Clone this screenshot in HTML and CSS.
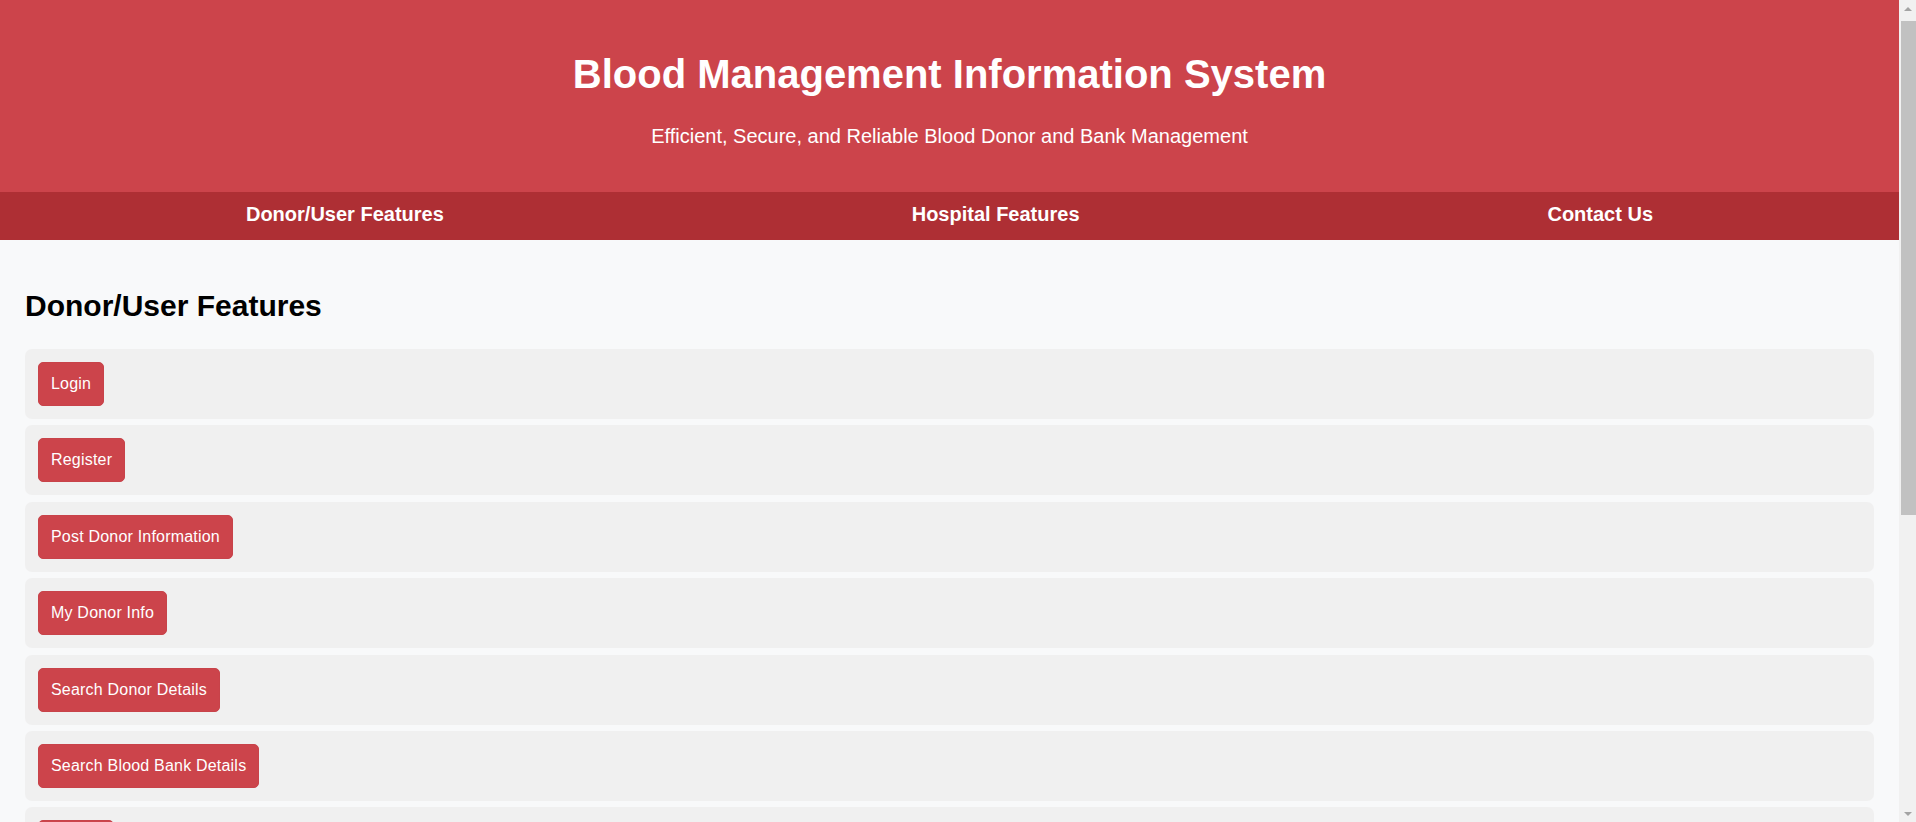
FILE: index.html
```html
<!DOCTYPE html>
<html lang="en">
<head>
<meta charset="utf-8">
<title>Blood Management Information System</title>
<link rel="stylesheet" href="styles.css">
</head>
<body>
<div class="page">
  <header class="site-header">
    <h1 class="site-title">Blood Management Information System</h1>
    <p class="site-subtitle">Efficient, Secure, and Reliable Blood Donor and Bank Management</p>
  </header>
  <nav class="main-nav">
    <a class="nav-link" href="#donor">Donor/User Features</a>
    <a class="nav-link" href="#hospital">Hospital Features</a>
    <a class="nav-link" href="#contact">Contact Us</a>
  </nav>
  <main class="content">
    <section class="feature-section" id="donor">
      <h2 class="section-title">Donor/User Features</h2>
      <ul class="feature-list">
        <li class="feature-item"><button class="feature-btn">Login</button></li>
        <li class="feature-item"><button class="feature-btn">Register</button></li>
        <li class="feature-item"><button class="feature-btn">Post Donor Information</button></li>
        <li class="feature-item"><button class="feature-btn">My Donor Info</button></li>
        <li class="feature-item"><button class="feature-btn">Search Donor Details</button></li>
        <li class="feature-item"><button class="feature-btn">Search Blood Bank Details</button></li>
        <li class="feature-item"><button class="feature-btn">Logout</button></li>
      </ul>
    </section>
  </main>
</div>
<div class="scrollbar" aria-hidden="true">
  <div class="scroll-arrow scroll-arrow-up"></div>
  <div class="scroll-track"><div class="scroll-thumb"></div></div>
  <div class="scroll-arrow scroll-arrow-down"></div>
</div>
</body>
</html>
```
FILE: styles.css
```css
html, body {
  margin: 0;
  padding: 0;
}

body {
  font-family: "Liberation Sans", Arial, sans-serif;
  background: #f8f9fa;
  color: #000;
}

.page {
  margin-right: 17px;
  min-height: 1311px;
}

.site-header {
  background: #cc444b;
  color: #fff;
  text-align: center;
  padding: 52px 20px 44px;
}

.site-title {
  margin: 0 0 28px;
  font-size: 40px;
  font-weight: bold;
  line-height: normal;
}

.site-subtitle {
  margin: 0;
  font-size: 20px;
  line-height: normal;
}

.main-nav {
  display: flex;
  justify-content: space-around;
  background: #ae2f34;
  padding: 11px 12px 14px;
}

.nav-link {
  color: #fff;
  text-decoration: none;
  font-size: 20px;
  font-weight: bold;
  line-height: normal;
}

.content {
  padding: 25px;
}

.section-title {
  margin: 24px 0 26px;
  font-size: 30px;
  font-weight: bold;
  line-height: normal;
}

.feature-list {
  list-style: none;
  margin: 0;
  padding: 0;
  display: flex;
  flex-direction: column;
  gap: 6.4px;
}

.feature-item {
  background: #f0f0f0;
  border-radius: 7px;
  padding: 13px;
}

.feature-btn {
  font-family: "Liberation Sans", Arial, sans-serif;
  font-size: 16px;
  line-height: normal;
  letter-spacing: 0.2px;
  color: #fff;
  background: #cc444b;
  border: 1px solid #c8434a;
  border-radius: 5px;
  padding: 12px;
  cursor: pointer;
}

/* classic window scrollbar drawn over the right edge */
.scrollbar {
  position: fixed;
  top: 0;
  right: 0;
  width: 17px;
  height: 100vh;
  background: #f1f1f1;
  display: flex;
  flex-direction: column;
}

.scroll-arrow {
  height: 17px;
  flex: none;
  display: flex;
  align-items: center;
  justify-content: center;
}

.scroll-arrow::before {
  content: "";
  width: 0;
  height: 0;
  border-left: 4px solid transparent;
  border-right: 4px solid transparent;
}

.scroll-arrow-up::before {
  border-bottom: 4px solid #a3a3a3;
}

.scroll-arrow-down::before {
  border-top: 4px solid #a3a3a3;
}

.scroll-track {
  flex: 1;
  padding: 4px 0 0 2px;
}

.scroll-thumb {
  height: 494px;
  background: #c1c1c1;
}
```
